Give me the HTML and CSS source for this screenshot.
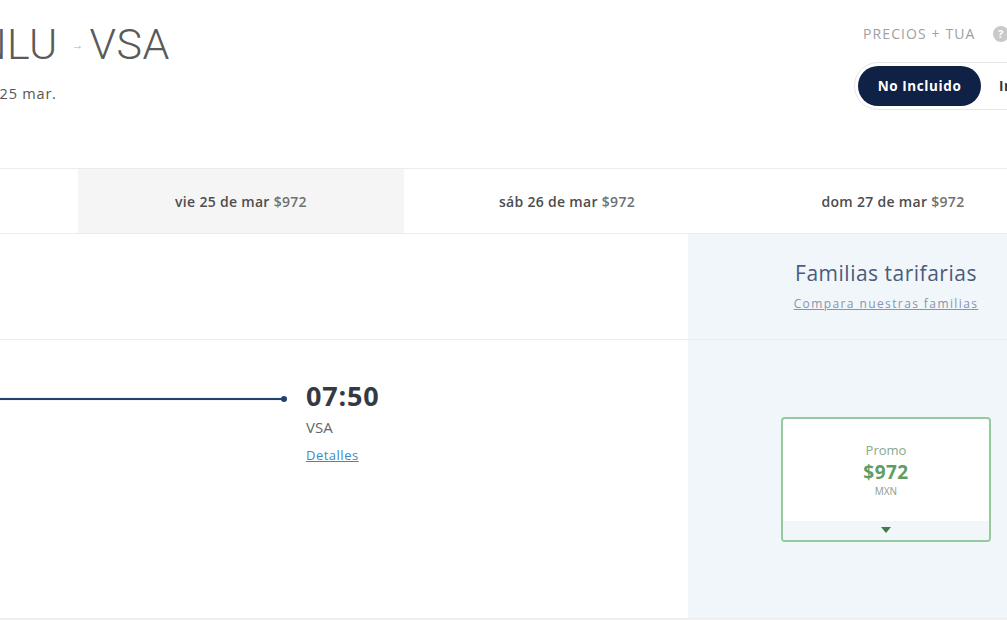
FILE: index.html
```html
<!doctype html>
<html lang="es">
<head>
    <meta charset="utf-8">
    <title>NLU - VSA</title>
    <link rel="stylesheet" href="styles.css">
</head>
<body>
    <div class="page">
        <div class="wrap">

            <!-- Route header -->
            <div class="head">
                <div class="route">
                    <h1 class="route-title">NLU<span class="route-arrow">&rarr;</span>VSA</h1>
                    <div class="route-date">vie, 25 mar.</div>
                </div>
                <div class="prices">
                    <div class="prices-label">
                        <span>PRECIOS + TUA</span>
                        <span class="info-icon">?</span>
                    </div>
                    <div class="toggle">
                        <span class="toggle-opt active">No Incluido</span>
                        <span class="toggle-opt">Incluido</span>
                    </div>
                </div>
            </div>

            <!-- Date tabs -->
            <div class="tabs">
                <div class="tab">jue 24 de mar $972</div>
                <div class="tab active">vie 25 de mar <span class="tab-price">$972</span></div>
                <div class="tab">sáb 26 de mar <span class="tab-price">$972</span></div>
                <div class="tab">dom 27 de mar <span class="tab-price">$972</span></div>
            </div>

            <!-- Results -->
            <div class="row row-head">
                <div class="cell"></div>
                <div class="cell fares-head">
                    <div class="fares-title">Familias tarifarias</div>
                    <a class="fares-link" href="#">Compara nuestras familias</a>
                </div>
            </div>

            <div class="row row-flight">
                <div class="cell flight">
                    <div class="stop">
                        <div class="stop-time">05:55</div>
                        <div class="stop-code">NLU</div>
                    </div>
                    <div class="flight-line"><span class="dot"></span></div>
                    <div class="stop">
                        <div class="stop-time">07:50</div>
                        <div class="stop-code">VSA</div>
                        <a class="details" href="#">Detalles</a>
                    </div>
                </div>
                <div class="cell fares">
                    <div class="fare-card">
                        <div class="fare-body">
                            <div class="fare-name">Promo</div>
                            <div class="fare-price">$972</div>
                            <div class="fare-cur">MXN</div>
                        </div>
                        <div class="fare-foot"><span class="caret"></span></div>
                    </div>
                </div>
            </div>

        </div>
    </div>
</body>
</html>
```

FILE: styles.css
```css
body {
    margin: 0;
    font-family: 'Open Sans', 'Noto Sans', sans-serif;
    background-color: #ffffff;
    color: #444;
}

.page {
    width: 1007px;
    height: 620px;
    overflow: hidden;
    background-color: #f2f2f2;
}

.wrap {
    width: 1332px;
    margin-left: -248px;
    background-color: #fff;
}

/* header */
.head {
    display: flex;
    height: 168px;
    margin-right: -23px;
    padding-left: 224px;
    box-sizing: border-box;
}

.route {
    flex: 1;
    padding-top: 18px;
}

.route-title {
    margin: 0;
    font-family: Roboto, sans-serif;
    font-size: 43px;
    font-weight: 300;
    line-height: 52px;
    color: #5a5a5a;
    letter-spacing: 0.4px;
}

.route-arrow {
    display: inline-block;
    margin: 0 6px 0 14px;
    font-size: 12px;
    color: #b5b5b5;
    vertical-align: 10px;
    letter-spacing: 0;
}

.route-date {
    margin-top: 13px;
    margin-left: -7px;
    font-size: 14.5px;
    color: #555;
    letter-spacing: 0.8px;
}

.prices {
    width: 250px;
    padding-top: 24px;
}

.prices-label {
    display: flex;
    align-items: center;
    gap: 17px;
    padding-left: 6px;
    font-size: 14px;
    color: #a0a0a0;
    letter-spacing: 1.1px;
}

.info-icon {
    width: 16px;
    height: 16px;
    border-radius: 50%;
    background-color: #c9c9c9;
    color: #fff;
    font-size: 11px;
    font-weight: 700;
    text-align: center;
    line-height: 16px;
    letter-spacing: 0;
}

.toggle {
    display: flex;
    align-items: center;
    margin-top: 19px;
    margin-left: -3px;
    padding: 3px;
    border: 1px solid #e6e6e6;
    border-radius: 24px;
}

.toggle-opt {
    height: 40px;
    padding: 0 18px;
    line-height: 40px;
    font-size: 13.5px;
    font-weight: 700;
    color: #333;
    white-space: nowrap;
    letter-spacing: 0.6px;
}

.toggle-opt.active {
    width: 123px;
    padding: 0;
    text-align: center;
    background-color: #0f2144;
    color: #fff;
    border-radius: 20px;
}

/* tabs */
.tabs {
    display: flex;
    height: 64px;
    border-top: 1px solid #ececec;
    border-bottom: 1px solid #ececec;
}

.tab {
    width: 326px;
    display: flex;
    align-items: center;
    justify-content: center;
    gap: 4px;
    font-size: 14px;
    font-weight: 600;
    color: #4d4d4d;
    letter-spacing: 0.3px;
}

.tab.active {
    background-color: #f5f5f6;
}

.tab-price {
    color: #707070;
}

/* rows */
.row {
    display: grid;
    grid-template-columns: 936px 396px;
    border-bottom: 1px solid #ececec;
}

.row-head {
    height: 105px;
}

.row-flight {
    height: 278px;
}

.fares-head,
.fares {
    background-color: #f1f6fb;
}

.fares-head {
    display: flex;
    flex-direction: column;
    align-items: center;
    padding-top: 25px;
}

.fares-title {
    font-size: 21px;
    color: #4b5b7a;
    letter-spacing: 0.5px;
}

.fares-link {
    margin-top: 8px;
    font-size: 12px;
    color: #8794ad;
    letter-spacing: 1.4px;
}

/* flight */
.flight {
    display: flex;
    align-items: flex-start;
    gap: 22px;
    padding-top: 39px;
    padding-left: 80px;
}

.stop {
    width: 100px;
    display: flex;
    flex-direction: column;
}

.stop:first-child {
    width: 80px;
}

.stop-time {
    font-size: 27px;
    font-weight: 700;
    line-height: 34px;
    color: #333a44;
    letter-spacing: 0.8px;
}

.stop-code {
    margin-top: 4px;
    font-size: 15px;
    color: #666;
}

.details {
    margin-top: 9px;
    font-size: 13px;
    color: #3b8ac6;
    letter-spacing: 0.5px;
}

.flight-line {
    position: relative;
    width: 350px;
    height: 2px;
    margin-top: 19px;
    background-color: #21416f;
    box-shadow: 0 0 1px #7d9bbd;
}

.dot {
    position: absolute;
    right: -3px;
    top: -2px;
    width: 6px;
    height: 6px;
    border-radius: 50%;
    background-color: #21416f;
}

/* fare card */
.fares {
    display: flex;
    align-items: center;
    justify-content: center;
}

.fare-card {
    width: 210px;
    height: 125px;
    box-sizing: border-box;
    display: flex;
    flex-direction: column;
    border: 2px solid #95cb9c;
    border-radius: 4px;
    background-color: #fff;
    overflow: hidden;
}

.fare-body {
    flex: 1;
    display: flex;
    flex-direction: column;
    align-items: center;
    padding-top: 22px;
}

.fare-name {
    font-size: 13px;
    line-height: 18px;
    color: #86a88b;
}

.fare-price {
    margin-top: 1px;
    font-size: 19px;
    font-weight: 700;
    line-height: 24px;
    color: #5d9d66;
    letter-spacing: 0.5px;
}

.fare-cur {
    font-size: 10px;
    line-height: 14px;
    color: #8a9c8d;
}

.fare-foot {
    height: 19px;
    display: flex;
    align-items: center;
    justify-content: center;
    background-color: #f1f6f8;
}

.caret {
    width: 0;
    height: 0;
    border-left: 5px solid transparent;
    border-right: 5px solid transparent;
    border-top: 6px solid #3f7b4c;
}
```
